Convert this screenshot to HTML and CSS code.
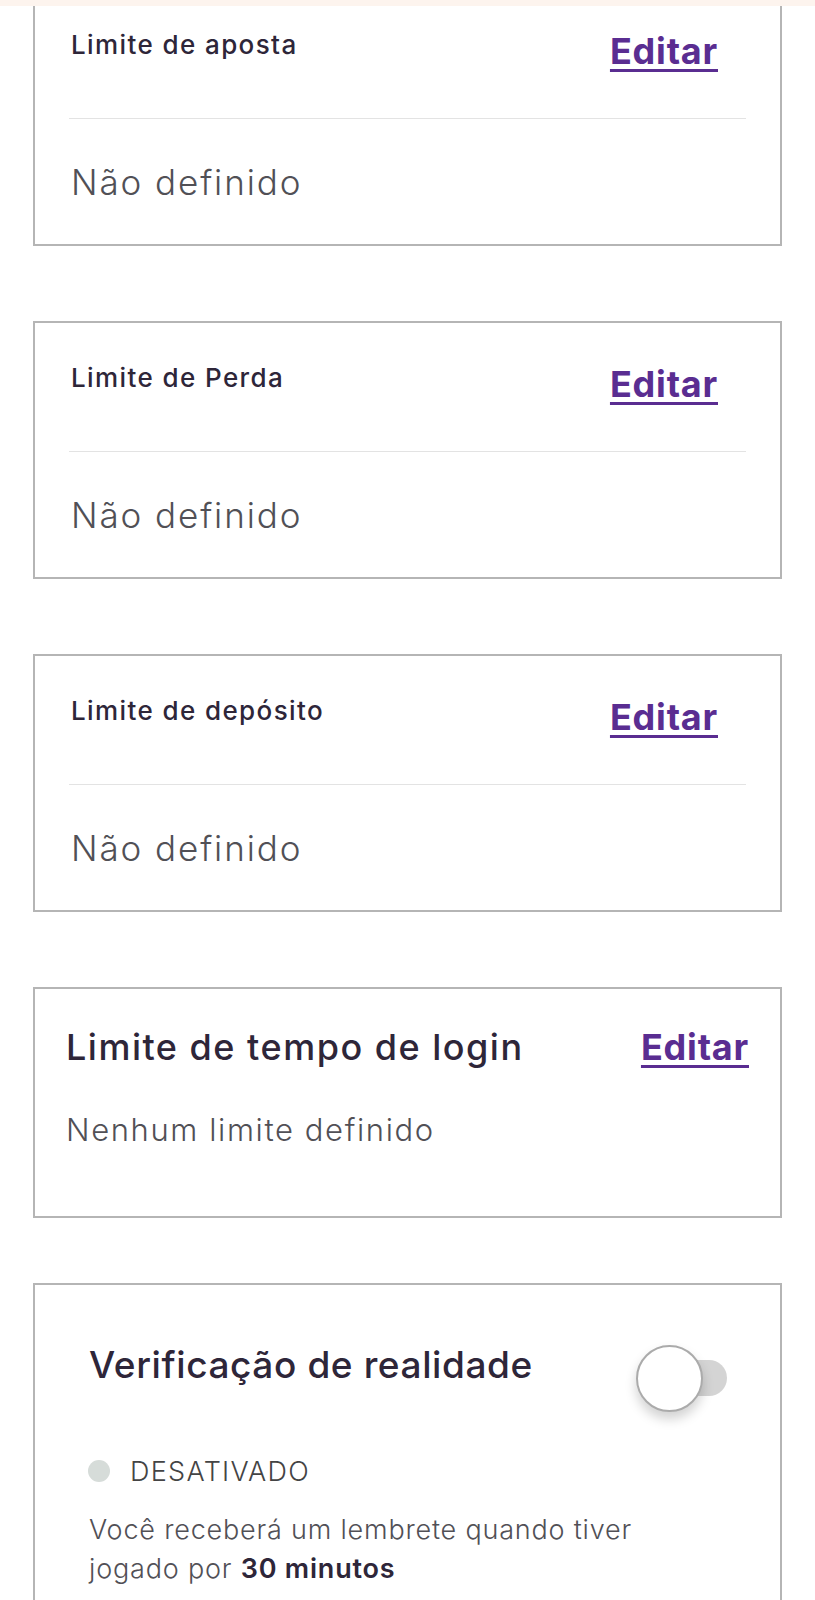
FILE: index.html
```html
<!DOCTYPE html>
<html lang="pt">
<head>
<meta charset="UTF-8">
<meta name="viewport" content="width=device-width, initial-scale=1.0">
<title>Limites</title>
<link rel="stylesheet" href="styles.css">
</head>
<body>

<div class="top-strip"></div>

<div class="limits">
  <div class="card card-cut">
    <div class="card-head">
      <span class="card-title">Limite de aposta</span>
      <a class="edit-link" href="#">Editar</a>
    </div>
    <div class="divider"></div>
    <div class="card-value">Não definido</div>
  </div>

  <div class="card">
    <div class="card-head">
      <span class="card-title">Limite de Perda</span>
      <a class="edit-link" href="#">Editar</a>
    </div>
    <div class="divider"></div>
    <div class="card-value">Não definido</div>
  </div>

  <div class="card">
    <div class="card-head">
      <span class="card-title">Limite de depósito</span>
      <a class="edit-link" href="#">Editar</a>
    </div>
    <div class="divider"></div>
    <div class="card-value">Não definido</div>
  </div>

  <div class="card card-login">
    <div class="login-head">
      <span class="login-title">Limite de tempo de login</span>
      <a class="edit-link" href="#">Editar</a>
    </div>
    <div class="login-value">Nenhum limite definido</div>
  </div>

  <div class="card card-reality">
    <div class="reality-head">
      <span class="reality-title">Verificação de realidade</span>
      <div class="toggle">
        <span class="toggle-track"></span>
        <span class="toggle-knob"></span>
      </div>
    </div>
    <div class="status">
      <span class="status-dot"></span>
      <span class="status-text">DESATIVADO</span>
    </div>
    <p class="reality-text">Você receberá um lembrete quando tiver jogado por <b>30 minutos</b></p>
  </div>
</div>

</body>
</html>
```

FILE: styles.css
```css
body {
  margin: 0;
  background-color: #fff;
  font-family: "Inter", "Liberation Sans", sans-serif;
  color: #2e2639;
}
.top-strip {
  height: 6px;
  background-color: #fdf4ee;
}
.limits {
  display: flex;
  flex-direction: column;
  padding: 0 33px;
}
.card {
  border: 2px solid #b5b5b5;
  padding: 0 34px;
  margin-bottom: 75px;
}
.card-cut {
  border-top: none;
}
.card-head {
  display: flex;
  justify-content: space-between;
  align-items: flex-start;
  height: 128px;
  box-sizing: border-box;
  padding: 40px 28px 0 2px;
}
.card-cut .card-head {
  height: 112px;
  padding-top: 24px;
}
.card-title {
  font-size: 26px;
  line-height: 30px;
  font-weight: 500;
  letter-spacing: 1.4px;
}
.edit-link {
  margin-top: 1px;
  font-size: 36px;
  line-height: 40px;
  font-weight: 700;
  letter-spacing: 0.8px;
  color: #5a2d91;
  text-decoration: underline;
  text-decoration-thickness: 3px;
  text-underline-offset: 5px;
}
.divider {
  height: 1px;
  background-color: #e3e3e3;
}
.card-value {
  padding: 43px 2px 42px;
  font-size: 35px;
  line-height: 40px;
  font-weight: 300;
  letter-spacing: 1.9px;
  color: #515056;
}

/* login time card */
.card-login {
  padding: 36px 31px 68px;
  margin-bottom: 65px;
}
.login-head {
  display: flex;
  justify-content: space-between;
  align-items: baseline;
}
.login-title {
  font-size: 36px;
  line-height: 44px;
  font-weight: 500;
  letter-spacing: 1.5px;
}
.card-login .edit-link {
  margin-top: 0;
}
.login-value {
  margin-top: 43px;
  font-size: 31px;
  line-height: 36px;
  font-weight: 300;
  letter-spacing: 1.6px;
  color: #515056;
}

/* reality check card */
.card-reality {
  padding: 57px 53px 80px 53px;
  margin-bottom: 0;
}
.reality-head {
  display: flex;
  justify-content: space-between;
  align-items: flex-start;
  padding-left: 1px;
}
.reality-title {
  font-size: 37px;
  line-height: 46px;
  font-weight: 500;
  letter-spacing: 0.6px;
}
.toggle {
  position: relative;
  width: 91px;
  height: 67px;
  margin-top: 3px;
}
.toggle-track {
  position: absolute;
  right: 0;
  top: 15px;
  width: 72px;
  height: 36px;
  border-radius: 18px;
  background-color: #d4d4d4;
}
.toggle-knob {
  position: absolute;
  left: 0;
  top: 0;
  width: 67px;
  height: 67px;
  box-sizing: border-box;
  border-radius: 50%;
  background-color: #fff;
  border: 2px solid #ababab;
  box-shadow: 0 7px 12px rgba(0, 0, 0, 0.18);
}
.status {
  display: flex;
  align-items: center;
  gap: 20px;
  height: 30px;
  margin-top: 44px;
}
.status-dot {
  width: 22px;
  height: 22px;
  border-radius: 50%;
  background-color: #d6dcd9;
}
.status-text {
  font-size: 27px;
  font-weight: 300;
  letter-spacing: 1.3px;
  color: #444;
}
.reality-text {
  margin: 24px 0 0 1px;
  font-size: 27px;
  line-height: 39px;
  font-weight: 300;
  letter-spacing: 0.8px;
  color: #515056;
}
.reality-text b {
  font-weight: 600;
  color: #2e2639;
}
```
